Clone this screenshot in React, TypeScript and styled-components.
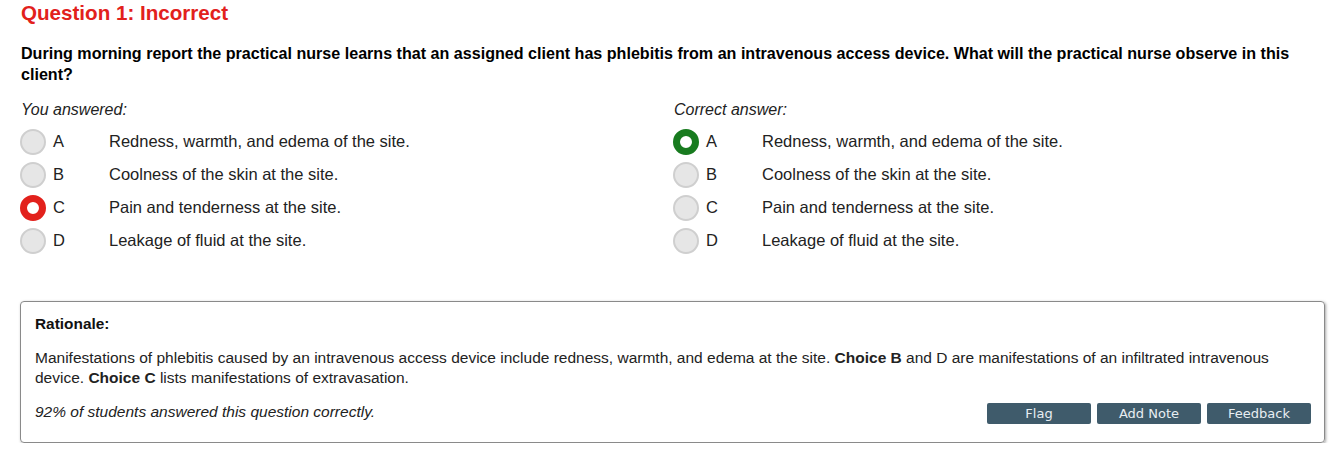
import React from 'react';
import styled, { createGlobalStyle } from 'styled-components';

type Choice = {
  letter: string;
  text: string;
};

const choices: Choice[] = [
  { letter: 'A', text: 'Redness, warmth, and edema of the site.' },
  { letter: 'B', text: 'Coolness of the skin at the site.' },
  { letter: 'C', text: 'Pain and tenderness at the site.' },
  { letter: 'D', text: 'Leakage of fluid at the site.' },
];

const GlobalStyle = createGlobalStyle`
  body {
    margin: 0;
    background: #fff;
    font-family: "Liberation Sans", Arial, sans-serif;
    color: #000;
  }
`;

const AnswerColumn = ({
  label,
  selected,
  tone,
}: {
  label: string;
  selected: string;
  tone: 'red' | 'green';
}) => (
  <Column>
    <ColumnLabel>{label}</ColumnLabel>
    {choices.map((c) => (
      <OptionRow key={c.letter}>
        <Radio state={c.letter === selected ? tone : 'off'} />
        <Letter>{c.letter}</Letter>
        <OptionText>{c.text}</OptionText>
      </OptionRow>
    ))}
  </Column>
);

export default function App() {
  return (
    <Page>
      <GlobalStyle />
      <Title>Question 1: Incorrect</Title>
      <Question>
        During morning report the practical nurse learns that an assigned client has phlebitis from an
        intravenous access device. What will the practical nurse observe in this client?
      </Question>
      <Answers>
        <AnswerColumn label="You answered:" selected="C" tone="red" />
        <AnswerColumn label="Correct answer:" selected="A" tone="green" />
      </Answers>
      <RationaleBox>
        <RationaleTitle>Rationale:</RationaleTitle>
        <RationaleText>
          <span>
            Manifestations of phlebitis caused by an intravenous access device include redness, warmth, and
            edema at the site.{' '}
          </span>
          <b>Choice B</b>
          <span> and D are manifestations of an infiltrated intravenous </span>
          <span>device. </span>
          <b>Choice C</b>
          <span> lists manifestations of extravasation.</span>
        </RationaleText>
        <Footer>
          <Stat>92% of students answered this question correctly.</Stat>
          <Buttons>
            <ActionButton>Flag</ActionButton>
            <ActionButton>Add Note</ActionButton>
            <ActionButton>Feedback</ActionButton>
          </Buttons>
        </Footer>
      </RationaleBox>
    </Page>
  );
}

const Page = styled.div`
  padding: 0 18px 0 20px;
`;

const Title = styled.h1`
  margin: 0;
  padding-left: 1px;
  font-size: 20.6px;
  line-height: 26px;
  font-weight: bold;
  color: #e2211c;
`;

const Question = styled.p`
  margin: 17px 0 0;
  padding-left: 1px;
  font-size: 16.1px;
  line-height: 21px;
  font-weight: bold;
  color: #000;
  max-width: 1285px;
`;

const Answers = styled.div`
  display: grid;
  grid-template-columns: 653px 1fr;
  margin-top: 15px;
`;

const Column = styled.div`
  display: flex;
  flex-direction: column;
`;

const ColumnLabel = styled.div`
  padding-left: 1px;
  font-size: 16px;
  line-height: 20px;
  font-style: italic;
  color: #222;
  margin-bottom: 5px;
`;

const OptionRow = styled.div`
  display: flex;
  align-items: center;
  height: 33px;
  font-size: 16.5px;
  color: #222;
`;

const Radio = styled.span<{ state: 'off' | 'red' | 'green' }>`
  box-sizing: border-box;
  width: 26px;
  height: 26px;
  border-radius: 50%;
  flex-shrink: 0;
  background: ${(p) => (p.state === 'off' ? '#e6e6e6' : '#fff')};
  border: ${(p) =>
    p.state === 'red'
      ? '7px solid #e2211c'
      : p.state === 'green'
      ? '7px solid #187b1f'
      : '2px solid #cfcfcf'};
`;

const Letter = styled.span`
  width: 63px;
  padding-left: 7px;
  box-sizing: border-box;
`;

const OptionText = styled.span``;

const RationaleBox = styled.div`
  margin-top: 44px;
  border: 1px solid #8a8a8a;
  border-radius: 4px;
  box-shadow: 1px 1px 3px rgba(0, 0, 0, 0.35);
  padding: 12px 13px 17px 14px;
  color: #222;
`;

const RationaleTitle = styled.div`
  font-size: 15.4px;
  line-height: 20px;
  font-weight: bold;
  color: #111;
`;

const RationaleText = styled.p`
  margin: 14px 0 0;
  font-size: 15.5px;
  line-height: 20px;
  max-width: 1250px;
`;

const Footer = styled.div`
  display: flex;
  justify-content: space-between;
  align-items: flex-start;
  margin-top: 14px;
  height: 23px;
`;

const Stat = styled.span`
  font-size: 15.5px;
  line-height: 20px;
  font-style: italic;
`;

const Buttons = styled.div`
  display: flex;
  gap: 6px;
  margin-top: 1px;
`;

const ActionButton = styled.button`
  width: 104px;
  height: 21px;
  padding: 0;
  border: none;
  border-radius: 2px;
  background: #3f5b6b;
  color: #e8eef2;
  font-family: "DejaVu Sans", Verdana, sans-serif;
  font-size: 13px;
  line-height: 21px;
  cursor: pointer;
`;
